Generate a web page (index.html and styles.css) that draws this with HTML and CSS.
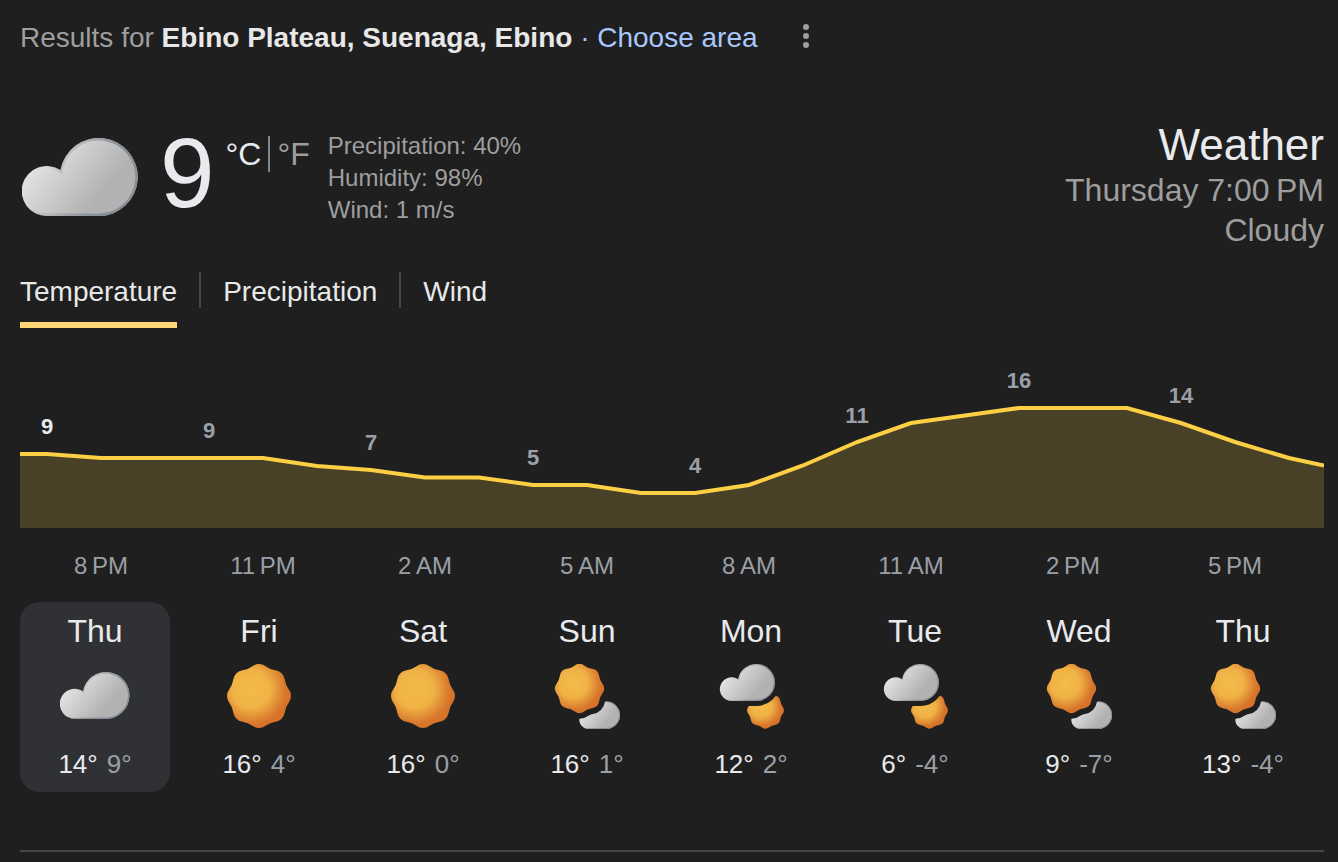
FILE: index.html
```html
<!DOCTYPE html>
<html lang="en">
<head>
  <meta charset="UTF-8">
  <meta name="viewport" content="width=device-width, initial-scale=1.0">
  <title>Weather - Ebino Plateau</title>
  <link rel="stylesheet" href="styles.css">
</head>
<body>

  <!-- Shared icon shapes -->
  <svg class="defs" width="0" height="0" aria-hidden="true">
    <defs>
      <linearGradient id="cloudFill" gradientUnits="userSpaceOnUse" x1="10" y1="26" x2="66" y2="72">
        <stop offset="0" stop-color="#e4e4e4"/>
        <stop offset="1" stop-color="#b2b2b2"/>
      </linearGradient>
      <linearGradient id="cloudRim" gradientUnits="userSpaceOnUse" x1="20" y1="40" x2="84" y2="60">
        <stop offset="0" stop-color="#868e96" stop-opacity="0"/>
        <stop offset="1" stop-color="#868e96"/>
      </linearGradient>
      <radialGradient id="sunFill" gradientUnits="userSpaceOnUse" cx="-8" cy="-7" r="38">
        <stop offset="0" stop-color="#f5ba4a"/>
        <stop offset="0.5" stop-color="#f0b245"/>
        <stop offset="0.9" stop-color="#d8792d"/>
        <stop offset="1" stop-color="#d6722a"/>
      </radialGradient>
      <path id="cloudShape" d="M25 78A25 25 0 1 1 38.4 32.1A39 39 0 1 1 76.4 78Z"/>
      <path id="sunShape" d="M-6.57-29.82A11 11 0 0 1 6.57-29.82A22 22 0 0 0 16.45-25.73A11 11 0 0 1 25.73-16.45A22 22 0 0 0 29.82-6.57A11 11 0 0 1 29.82 6.57A22 22 0 0 0 25.73 16.45A11 11 0 0 1 16.45 25.73A22 22 0 0 0 6.57 29.82A11 11 0 0 1-6.57 29.82A22 22 0 0 0-16.45 25.73A11 11 0 0 1-25.73 16.45A22 22 0 0 0-29.82 6.57A11 11 0 0 1-29.82-6.57A22 22 0 0 0-25.73-16.45A11 11 0 0 1-16.45-25.73A22 22 0 0 0-6.57-29.82Z"/>
      <clipPath id="cloudClip"><use href="#cloudShape"/></clipPath>
      <g id="cloud">
        <use href="#cloudShape" fill="url(#cloudFill)"/>
        <use href="#cloudShape" fill="none" stroke="url(#cloudRim)" stroke-width="5" clip-path="url(#cloudClip)"/>
      </g>
      <use id="sun" href="#sunShape" fill="url(#sunFill)"/>
      <mask id="behindSun" maskUnits="userSpaceOnUse" x="0" y="0" width="70" height="70">
        <rect width="70" height="70" fill="#fff"/>
        <use href="#sunShape" transform="translate(27.5 24.5) scale(0.766)" fill="#000" stroke="#000" stroke-width="15"/>
      </mask>
      <mask id="behindCloud" maskUnits="userSpaceOnUse" x="0" y="0" width="70" height="70">
        <rect width="70" height="70" fill="#fff"/>
        <use href="#cloudShape" transform="translate(4 0) scale(0.474)" fill="#000" stroke="#000" stroke-width="21"/>
      </mask>
      <symbol id="cloudy" viewBox="0 0 70 66">
        <use href="#cloud" transform="translate(0 8) scale(0.6)"/>
      </symbol>
      <symbol id="sunny" viewBox="0 0 70 66">
        <use href="#sun" transform="translate(35 32)"/>
      </symbol>
      <symbol id="partlyCloudy" viewBox="0 0 70 66">
        <use href="#sun" transform="translate(27.5 24.5) scale(0.766)"/>
        <g mask="url(#behindSun)"><use href="#cloud" transform="translate(27.5 37.5) scale(0.35)"/></g>
      </symbol>
      <symbol id="mostlyCloudy" viewBox="0 0 70 66">
        <g mask="url(#behindCloud)"><use href="#sun" transform="translate(49.5 46.2) scale(0.572)"/></g>
        <use href="#cloud" transform="translate(4 0) scale(0.474)"/>
      </symbol>
    </defs>
  </svg>

  <main class="weather">
    <header class="location">
      <p><span class="muted">Results for</span> <strong>Ebino Plateau, Suenaga, Ebino</strong> <a href="#">· Choose area</a></p>
      <button class="menu-button" aria-label="More options">
        <svg width="8" height="28" viewBox="0 0 8 28">
          <circle cx="4" cy="5" r="3"/><circle cx="4" cy="14" r="3"/><circle cx="4" cy="23" r="3"/>
        </svg>
      </button>
    </header>

    <!-- Current conditions -->
    <section class="current">
      <svg class="current-icon" viewBox="0 0 116 78" role="img" aria-label="Cloudy"><use href="#cloud"/></svg>
      <span class="current-temp">9</span>
      <div class="units">
        <button class="unit selected">°C</button>
        <button class="unit">°F</button>
      </div>
      <div class="details">
        <div>Precipitation: 40%</div>
        <div>Humidity: 98%</div>
        <div>Wind: 1 m/s</div>
      </div>
      <div class="summary">
        <h1>Weather</h1>
        <div>Thursday 7:00&#8239;PM</div>
        <div>Cloudy</div>
      </div>
    </section>

    <nav class="tabs">
      <button class="tab active">Temperature</button>
      <button class="tab">Precipitation</button>
      <button class="tab">Wind</button>
    </nav>

    <!-- Hourly temperature -->
    <svg class="chart" viewBox="0 0 1304 224" role="img" aria-label="Hourly temperature">
      <path class="chart-area" d="M0 94H27L81 98H243L297 106L351 110L405 117.5H459L513 125H567L621 133H675L729 125L783 105.5L837 82L891 63L945 55.5L999 48H1107L1161 63L1215 82L1269 98L1304 105.5V168H0Z"/>
      <path class="chart-line" d="M0 94H27L81 98H243L297 106L351 110L405 117.5H459L513 125H567L621 133H675L729 125L783 105.5L837 82L891 63L945 55.5L999 48H1107L1161 63L1215 82L1269 98L1304 105.5"/>
      <g class="chart-values">
        <text class="now" x="27" y="74">9</text>
        <text x="189" y="78">9</text>
        <text x="351" y="90">7</text>
        <text x="513" y="105">5</text>
        <text x="675" y="113">4</text>
        <text x="837" y="63">11</text>
        <text x="999" y="28">16</text>
        <text x="1161" y="43">14</text>
      </g>
      <g class="chart-hours">
        <text x="81" y="214">8&#8239;PM</text>
        <text x="243" y="214">11&#8239;PM</text>
        <text x="405" y="214">2&#8239;AM</text>
        <text x="567" y="214">5&#8239;AM</text>
        <text x="729" y="214">8&#8239;AM</text>
        <text x="891" y="214">11&#8239;AM</text>
        <text x="1053" y="214">2&#8239;PM</text>
        <text x="1215" y="214">5&#8239;PM</text>
      </g>
    </svg>

    <!-- Daily forecast -->
    <section class="days">
      <button class="day selected">
        <span class="day-name">Thu</span>
        <svg class="day-icon"><use href="#cloudy"/></svg>
        <span class="day-temps"><span>14°</span><span class="low">9°</span></span>
      </button>
      <button class="day">
        <span class="day-name">Fri</span>
        <svg class="day-icon"><use href="#sunny"/></svg>
        <span class="day-temps"><span>16°</span><span class="low">4°</span></span>
      </button>
      <button class="day">
        <span class="day-name">Sat</span>
        <svg class="day-icon"><use href="#sunny"/></svg>
        <span class="day-temps"><span>16°</span><span class="low">0°</span></span>
      </button>
      <button class="day">
        <span class="day-name">Sun</span>
        <svg class="day-icon"><use href="#partlyCloudy"/></svg>
        <span class="day-temps"><span>16°</span><span class="low">1°</span></span>
      </button>
      <button class="day">
        <span class="day-name">Mon</span>
        <svg class="day-icon"><use href="#mostlyCloudy"/></svg>
        <span class="day-temps"><span>12°</span><span class="low">2°</span></span>
      </button>
      <button class="day">
        <span class="day-name">Tue</span>
        <svg class="day-icon"><use href="#mostlyCloudy"/></svg>
        <span class="day-temps"><span>6°</span><span class="low">-4°</span></span>
      </button>
      <button class="day">
        <span class="day-name">Wed</span>
        <svg class="day-icon"><use href="#partlyCloudy"/></svg>
        <span class="day-temps"><span>9°</span><span class="low">-7°</span></span>
      </button>
      <button class="day">
        <span class="day-name">Thu</span>
        <svg class="day-icon"><use href="#partlyCloudy"/></svg>
        <span class="day-temps"><span>13°</span><span class="low">-4°</span></span>
      </button>
    </section>

    <hr class="divider">
  </main>

</body>
</html>
```
FILE: styles.css
```css
* {
  box-sizing: border-box;
  margin: 0;
  padding: 0;
}

body {
  font-family: "Liberation Sans", Arial, sans-serif;
  background-color: #1f1f1f;
  color: #e8e8e8;
}

button {
  font: inherit;
  color: inherit;
  background: none;
  border: none;
  cursor: pointer;
}

a {
  color: #a8c7fa;
  text-decoration: none;
}

.defs {
  display: block;
}

.weather {
  padding: 22px 14px 0 20px;
}

.muted {
  color: #9e9e9e;
}

/* Location line */
.location {
  display: flex;
  align-items: center;
  gap: 44px;
  font-size: 28px;
  line-height: 32px;
}

.menu-button {
  display: flex;
  height: 32px;
  fill: #9e9e9e;
}

/* Current conditions */
.current {
  display: flex;
  align-items: flex-start;
  margin-top: 66px;
  color: #9e9e9e;
}

.current-icon {
  width: 116px;
  height: 78px;
  margin: 18px 22px 0 2px;
}

.current-temp {
  margin-top: 4px;
  font-size: 98px;
  line-height: 98px;
  color: #e8eaed;
}

.units {
  display: flex;
  margin: 16px 0 0 11px;
  font-size: 32px;
  line-height: 36px;
}

.unit.selected {
  color: #e8eaed;
  padding-right: 7px;
}

.unit + .unit {
  border-left: 2px solid #80868b;
  padding-left: 7px;
}

.details {
  margin: 10px 0 0 18px;
  font-size: 24px;
  line-height: 32px;
}

.summary {
  margin-left: auto;
  text-align: right;
  font-size: 32px;
  line-height: 40px;
}

.summary h1 {
  font-size: 44px;
  font-weight: normal;
  line-height: 50px;
  color: #e8eaed;
}

/* Tabs */
.tabs {
  display: flex;
  align-items: flex-start;
  margin-top: 22px;
  font-size: 28px;
  line-height: 32px;
}

.tab {
  padding-top: 4px;
}

.tab.active {
  padding-bottom: 14px;
  border-bottom: 6px solid #fdd675;
}

.tab + .tab {
  margin-left: 22px;
  padding-left: 22px;
  border-left: 2px solid #444746;
}

/* Hourly chart */
.chart {
  display: block;
  width: 100%;
  margin-top: 32px;
}

.chart-area {
  fill: #494127;
}

.chart-line {
  fill: none;
  stroke: #fccf45;
  stroke-width: 4;
}

.chart-values,
.chart-hours {
  fill: #9aa0a6;
  text-anchor: middle;
}

.chart-values {
  font-size: 22px;
  font-weight: bold;
}

.chart-values .now {
  fill: #e8eaed;
}

.chart-hours {
  font-size: 24px;
}

/* Daily forecast */
.days {
  display: grid;
  grid-template-columns: repeat(8, 1fr);
  gap: 14px;
  margin-top: 18px;
  padding-right: 6px;
}

.day {
  display: flex;
  flex-direction: column;
  align-items: center;
  padding: 11px 0 12px;
  border-radius: 20px;
  color: #e8eaed;
}

.day.selected {
  background-color: #303134;
}

.day-name {
  font-size: 32px;
  line-height: 36px;
}

.day-icon {
  width: 70px;
  height: 66px;
  margin: 15px 0 18px;
}

.day-temps {
  display: flex;
  gap: 9px;
  font-size: 26px;
  line-height: 32px;
}

.low {
  color: #9aa0a6;
}

.divider {
  height: 2px;
  margin-top: 58px;
  border: none;
  background-color: #444746;
}
```
